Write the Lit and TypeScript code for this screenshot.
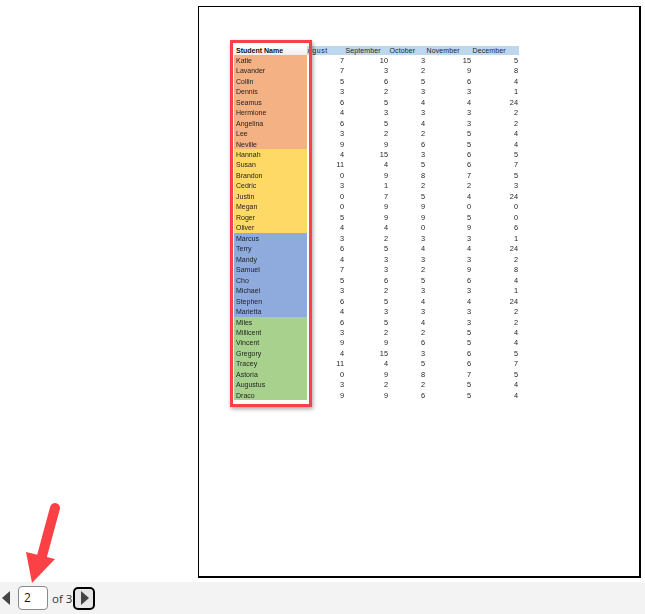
import { LitElement, html, css, svg } from "lit";
import { customElement } from "lit/decorators.js";

type Row = [string, number, number, number, number, number];
const groups: { cls: string; rows: Row[] }[] = [
  { cls: "orange", rows: [
    ["Katie",7,10,3,15,5],["Lavander",7,3,2,9,8],["Collin",5,6,5,6,4],["Dennis",3,2,3,3,1],["Seamus",6,5,4,4,24],
    ["Hermione",4,3,3,3,2],["Angelina",6,5,4,3,2],["Lee",3,2,2,5,4],["Neville",9,9,6,5,4] ] },
  { cls: "yellow", rows: [
    ["Hannah",4,15,3,6,5],["Susan",11,4,5,6,7],["Brandon",0,9,8,7,5],["Cedric",3,1,2,2,3],["Justin",0,7,5,4,24],
    ["Megan",0,9,9,0,0],["Roger",5,9,9,5,0],["Oliver",4,4,0,9,6] ] },
  { cls: "blue", rows: [
    ["Marcus",3,2,3,3,1],["Terry",6,5,4,4,24],["Mandy",4,3,3,3,2],["Samuel",7,3,2,9,8],["Cho",5,6,5,6,4],
    ["Michael",3,2,3,3,1],["Stephen",6,5,4,4,24],["Marietta",4,3,3,3,2] ] },
  { cls: "green", rows: [
    ["Miles",6,5,4,3,2],["Millicent",3,2,2,5,4],["Vincent",9,9,6,5,4],["Gregory",4,15,3,6,5],["Tracey",11,4,5,6,7],
    ["Astoria",0,9,8,7,5],["Augustus",3,2,2,5,4],["Draco",9,9,6,5,4] ] },
];
const months = ["August", "September", "October", "November", "December"];

@customElement("app-root")
export class AppRoot extends LitElement {
  static styles = css`
    :host { display: block; width: 645px; height: 614px; position: relative; overflow: hidden; background: #fff; font-family: "Open Sans", "Liberation Sans", sans-serif; }
    .root { display: flex; flex-direction: column; height: 614px; }
    .viewer { height: 582px; padding: 6px 0 0 198px; box-sizing: border-box; }
    .page { position: relative; box-sizing: border-box; width: 443px; height: 572px; border: 1.5px solid #000; border-right-width: 2px; border-bottom-width: 2px; padding: 38.5px 0 0 35px; }
    .sheet { display: grid; grid-template-columns: 73px 38px 44px 37px 46px 47px; grid-template-rows: 9.3px; grid-auto-rows: 10.47px; width: 285px; font-family: "Liberation Sans", sans-serif; font-size: 7px; color: #1f1f1f; filter: blur(0.3px); }
    .cell { line-height: 11.8px; white-space: nowrap; overflow: hidden; text-align: right; padding-right: 1px; font-size: 7.4px; }
    .name { text-align: left; padding: 0 0 0 2px; font-size: 7px; }
    .head { background: #bdd7ee; text-align: left; padding: 0 0 0 0.5px; line-height: 9.6px; letter-spacing: 0.1px; font-size: 7px; }
    .head.corner { background: linear-gradient(#fff, #eee); font-weight: 700; padding-left: 2px; letter-spacing: 0; color: #111; }
    .head.clip { text-indent: -5px; letter-spacing: 0.6px; }
    .orange { background: #f4b183; }
    .yellow { background: #ffd966; }
    .blue { background: #8faadc; }
    .green { background: #a9d18e; }
    .frame { position: absolute; left: 30.5px; top: 32.5px; width: 82px; height: 367px; box-sizing: border-box; border: 3.5px solid #fb4146; box-shadow: 1px 2px 4px rgba(0,0,0,.35); }
    .arrow { position: absolute; left: 0; top: 490px; pointer-events: none; }
    .bar { flex: 1; background: #f3f3f3; display: flex; align-items: center; padding: 0 0 0 2px; font-size: 11.5px; color: #333; }
    .tri { width: 8px; height: 14px; display: block; }
    .input { width: 30px; height: 24px; box-sizing: border-box; margin-left: 8px; background: #fff; border: 1px solid #8a8a8a; border-radius: 4px; padding-left: 5px; line-height: 22px; font-size: 12px; color: #1a1a1a; }
    .of { margin: 0 1px 0 4px; }
    .next { width: 22px; height: 23px; box-sizing: border-box; border: 2px solid #000; border-radius: 5px; background: #e6e6e6; display: flex; align-items: center; justify-content: center; padding: 0 0 0 1px; }
  `;

  render() {
    return html`
      <div class="root">
        <div class="viewer">
          <div class="page">
            <div class="sheet">
              <div class="cell head corner">Student Name</div>
              ${months.map((m, i) => html`<div class="cell head ${i === 0 ? "clip" : ""}">${m}</div>`)}
              ${groups.map(g => g.rows.map(r => html`
                <div class="cell name ${g.cls}">${r[0]}</div>
                ${r.slice(1).map(v => html`<div class="cell">${v}</div>`)}
              `))}
            </div>
            <div class="frame"></div>
          </div>
        </div>
        <div class="bar">
          <svg class="tri" viewBox="0 0 8 14"><path d="M8 0V14L0 7Z" fill="#444"/></svg>
          <div class="input">2</div>
          <span class="of">of 3</span>
          <button class="next" aria-label="Next page">
            <svg width="8" height="14" viewBox="0 0 8 14"><path d="M0 0V14L8 7Z" fill="#444"/></svg>
          </button>
        </div>
      </div>
      <svg class="arrow" width="70" height="100" viewBox="0 0 70 100">
        ${svg`<path d="M55 18L42 66" stroke="#fb4146" stroke-width="10" stroke-linecap="round" fill="none"/>
        <path d="M26 62L55 69L32 93Z" fill="#fb4146"/>`}
      </svg>
    `;
  }
}
